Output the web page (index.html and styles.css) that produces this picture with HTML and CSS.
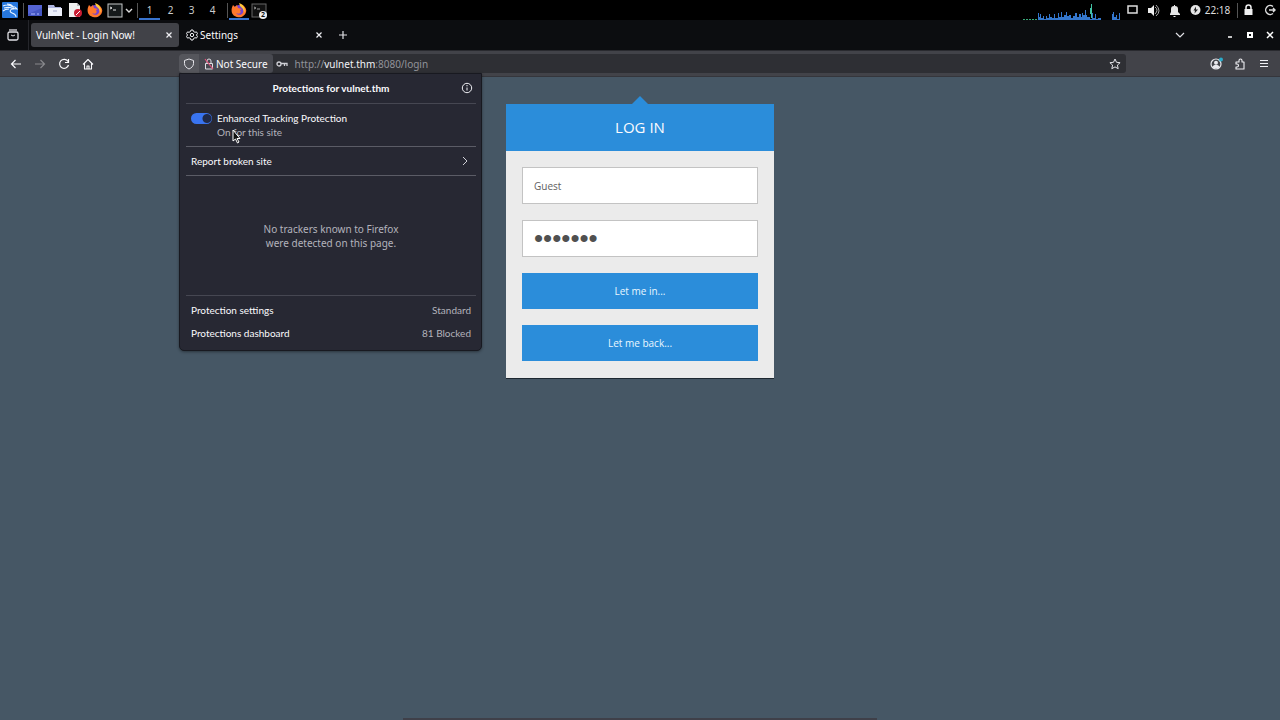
FILE: index.html
```html
<!DOCTYPE html>
<html lang="en">
<head>
    <meta charset="UTF-8">
    <meta name="viewport" content="width=device-width, initial-scale=1.0">
    <title>VulnNet - Login Now!</title>
    <link rel="stylesheet" href="styles.css">
</head>
<body>
    <!-- Desktop panel -->
    <header class="panel">
        <div class="panel-group">
            <button class="kali" aria-label="Applications">
                <svg width="16" height="16" viewBox="0 0 16 16"><rect width="16" height="16" rx="1" fill="#2777dc"/><path d="M1 4c4-2 7-1 10 1M2 6c4-1 7-1 9 1-3 0-4 3-1 4s4 2 4 4M5 2c3 0 5 1 6 3 2-1 3 1 4 2-2 0-3 0-4-1M1 9c2-2 4-2 6-2" fill="none" stroke="#e8f3ff" stroke-width="1.1"/></svg>
            </button>
            <span class="divider"></span>
            <button aria-label="Show desktop">
                <svg width="16" height="16" viewBox="0 0 16 16"><path d="M1 3h14v11H1z" fill="#4455c0"/><path d="M1 3h14v3L1 12z" fill="#5564d2"/><path d="M4 12h4M10 12h2" stroke="#aeb9ff"/></svg>
            </button>
            <button aria-label="Files">
                <svg width="16" height="16" viewBox="0 0 16 16"><path d="M1 3h6l1 2h6v3H1z" fill="#aeb4df"/><path d="M1 6h14v8H1z" fill="#eceef8"/><path d="M6 9h4" stroke="#a2a8c9"/></svg>
            </button>
            <button aria-label="Text editor">
                <svg width="16" height="16" viewBox="0 0 16 16"><path d="M2 1h8l3 3v11H2z" fill="#f0f0ef"/><path d="M10 1v3h3" fill="#bbb"/><circle cx="11" cy="11" r="4" fill="#c91d32"/><path d="M9 13l4-4" stroke="#fff"/></svg>
            </button>
            <button aria-label="Firefox">
                <svg width="16" height="16" viewBox="0 0 16 16"><circle cx="8" cy="9" r="6" fill="#7543d1"/><path d="M2 3l2 2 2-2 1 3 4 1-2 1c2 3-1 5-4 3 3 4 9 1 7-4l-2-5c4 2 6 5 5 8-1 4-5 6-9 5C1 14-1 9 2 3z" fill="#ff782c"/><path d="M8 1c5 2 7 6 5 10 0-4-2-5-4-7z" fill="#ffcb38"/></svg>
            </button>
            <button aria-label="Terminal">
                <svg width="16" height="16" viewBox="0 0 16 16"><rect x="1" y="2" width="14" height="13" fill="#15191a" stroke="#c5c8c8"/><path d="M3 5l2 1-2 1M6 8h3" fill="none" stroke="#e5e5e5"/></svg>
            </button>
            <button class="arrow" aria-label="More terminals">
                <svg width="8" height="16" viewBox="0 0 8 16"><path d="M1 7l3 3 3-3" fill="none" stroke="#ddd" stroke-width="1.4"/></svg>
            </button>
            <span class="divider"></span>
            <nav class="workspaces" aria-label="Workspaces">
                <button class="active">1</button>
                <button>2</button>
                <button>3</button>
                <button>4</button>
            </nav>
            <span class="divider"></span>
            <button class="active" aria-label="Firefox window">
                <svg width="16" height="16" viewBox="0 0 16 16"><circle cx="8" cy="9" r="6" fill="#7543d1"/><path d="M2 3l2 2 2-2 1 3 4 1-2 1c2 3-1 5-4 3 3 4 9 1 7-4l-2-5c4 2 6 5 5 8-1 4-5 6-9 5C1 14-1 9 2 3z" fill="#ff782c"/><path d="M8 1c5 2 7 6 5 10 0-4-2-5-4-7z" fill="#ffcb38"/></svg>
            </button>
            <button class="windows" aria-label="2 terminal windows">
                <svg width="16" height="16" viewBox="0 0 16 16"><rect x="1" y="2" width="14" height="13" fill="#111" stroke="#666"/><path d="M3 5l2 1-2 1M6 7h3" fill="none" stroke="#999"/></svg>
                <span class="badge">2</span>
            </button>
        </div>
        <div class="panel-group tray">
            <svg class="cpu" width="98" height="18" viewBox="0 0 98 18"><path d="M0 17.500h14" stroke="#38a879" stroke-dasharray="2 1"/><path d="M15 18v-7h1v4h1v-3h1v4h2v-2h1v3h2v-3h1v2h2v-4h1v3h2v1h2v-4h1v4h3v-5h1v4h2v-5h1v5h2v-2h2v-3h1v4h2v-1h2v3h2v-2h2v-3h2v4h2v-3h2v3h1v-4h1v2h2v-5h1v5h1v2h3v2h2v-6h1v5h2v-4h1v5h2v-1h3v2h11v-6h1v-2h1v5h2v-2h1v4h2v-6h1v7z" fill="#3477cd"/><path d="M68.500 16V2M67.500 12V6" stroke="#43c3a6" fill="none"/></svg>
            <button aria-label="Display">
                <svg width="13" height="16" viewBox="0 0 13 16"><path d="M2 4h9v7H2z" fill="none" stroke="#ddd" stroke-width="1.500"/></svg>
            </button>
            <button aria-label="Volume">
                <svg width="13" height="16" viewBox="0 0 13 16"><path d="M1 6h3l3-3v11l-3-3H1z" fill="#eee"/><path d="M8 5q4 3 0 7M9 3q6 6 0 11" fill="none" stroke="#aaa"/></svg>
            </button>
            <button aria-label="Notifications">
                <svg width="13" height="16" viewBox="0 0 13 16"><path d="M2 12l1-2V7c0-2 1-3 3-3V3h1v1c2 0 3 1 3 3v3l2 2v1H2zM5 14h3l-1 1H6z" fill="#e5e5e5"/></svg>
            </button>
            <button aria-label="Power">
                <svg width="13" height="16" viewBox="0 0 13 16"><circle cx="6.500" cy="8" r="5" fill="#e5e5e5"/><path d="M7 4.500L4.500 8.500H6L5.500 11.500 9 7.500H7z" fill="#222"/></svg>
            </button>
            <time>22:18</time>
            <span class="divider"></span>
            <button aria-label="Lock">
                <svg width="13" height="16" viewBox="0 0 13 16"><path d="M2.500 7h8v6h-8z" fill="#eee"/><path d="M4 7.500V5.500Q4 3 6.500 3T9 5.500v2" fill="none" stroke="#eee" stroke-width="1.500"/></svg>
            </button>
            <button aria-label="Log out">
                <svg width="13" height="16" viewBox="0 0 13 16"><path d="M10 4.500a4.500 4.500 0 1 0 0 7M6 8h6M10 6l2 2-2 2" fill="none" stroke="#ddd" stroke-width="1.400"/></svg>
            </button>
        </div>
    </header>

    <!-- Tab strip -->
    <div class="tabs">
        <button class="history" aria-label="View recent browsing">
            <svg width="16" height="16" viewBox="0 0 16 16"><rect x="3" y="5" width="10" height="8" rx="1.500" fill="none" stroke="#e1e1e6" stroke-width="1.300"/><path d="M4 3h8" stroke="#e1e1e6" stroke-width="1.300"/><path d="M6 8q2 2 4 0" fill="none" stroke="#e1e1e6"/></svg>
        </button>
        <div class="tab selected">
            <span>VulnNet - Login Now!</span>
            <button aria-label="Close tab"><svg width="8" height="8" viewBox="0 0 8 8"><path d="M1.500 1.500l5 5M6.500 1.500l-5 5" stroke="#f0f0f4" stroke-width="1.200"/></svg></button>
        </div>
        <div class="tab">
            <svg width="12" height="12" viewBox="0 0 12 12"><path d="M5 1h2l.5 1.500 1.500.8 1.500-.4 1 1.700L10.400 6l1.100 1.400-1 1.700-1.500-.4-1.500.8L7 11H5l-.5-1.500L3 8.700l-1.500.4-1-1.700L1.600 6 .5 4.600l1-1.700L3 3.300l1.500-.8z" fill="none" stroke="#f0f0f4"/><circle cx="6" cy="6" r="1.700" fill="none" stroke="#f0f0f4"/></svg>
            <span>Settings</span>
            <button aria-label="Close tab"><svg width="8" height="8" viewBox="0 0 8 8"><path d="M1.500 1.500l5 5M6.500 1.500l-5 5" stroke="#f0f0f4" stroke-width="1.200"/></svg></button>
        </div>
        <button class="new-tab" aria-label="New tab"><svg width="10" height="10" viewBox="0 0 10 10"><path d="M5 1v8M1 5h8" stroke="#e1e1e6" stroke-width="1.200"/></svg></button>
        <div class="window-controls">
            <button class="list-tabs" aria-label="List all tabs"><svg width="10" height="10" viewBox="0 0 10 10"><path d="M1 3l4 4 4-4" fill="none" stroke="#e1e1e6" stroke-width="1.200"/></svg></button>
            <button aria-label="Minimize"><svg width="10" height="10" viewBox="0 0 10 10"><path d="M3 7h4" stroke="#fff" stroke-width="1.500"/></svg></button>
            <button aria-label="Maximize"><svg width="10" height="10" viewBox="0 0 10 10"><path d="M3 3h4v4H3z" fill="none" stroke="#fff" stroke-width="2"/></svg></button>
            <button aria-label="Close"><svg width="10" height="10" viewBox="0 0 10 10"><path d="M2 2l6 6M8 2L2 8" stroke="#fff" stroke-width="1.500"/></svg></button>
        </div>
    </div>

    <!-- Navigation bar -->
    <div class="toolbar">
        <div class="tools">
            <button aria-label="Back"><svg width="16" height="16" viewBox="0 0 16 16"><path d="M13 8H3.500M7.500 4l-4 4 4 4" fill="none" stroke="#fbfbfe" stroke-width="1.200"/></svg></button>
            <button aria-label="Forward" disabled><svg width="16" height="16" viewBox="0 0 16 16"><path d="M3 8h9.500M8.500 4l4 4-4 4" fill="none" stroke="#88888c" stroke-width="1.200"/></svg></button>
            <button aria-label="Reload"><svg width="16" height="16" viewBox="0 0 16 16"><path d="M12 5.500A4.500 4.500 0 1 0 12.500 9M12.500 3v3.500H9" fill="none" stroke="#fbfbfe" stroke-width="1.200"/></svg></button>
            <button aria-label="Home"><svg width="16" height="16" viewBox="0 0 16 16"><path d="M3 8.500l5-5 5 5M4.500 7.500V13h7V7.500M7 13v-3h2v3" fill="none" stroke="#fbfbfe" stroke-width="1.100" stroke-linejoin="round"/></svg></button>
        </div>
        <div class="url-bar">
            <button class="shield" aria-label="Protections" aria-expanded="true"><svg width="12" height="12" viewBox="0 0 12 12"><path d="M6 1l4.500 1.500v3C10.500 8 8.500 10 6 11 3.500 10 1.500 8 1.500 5.500v-3z" fill="none" stroke="#e5e5ea" stroke-linejoin="round"/></svg></button>
            <button class="security"><svg width="12" height="12" viewBox="0 0 12 12"><path d="M2.500 5.500h7V11h-7zM4 5V3q0-2 2-2t2 2v2" fill="none" stroke="#dedee3"/><path d="M2 1l8 10" stroke="#e2507b" stroke-width="1.200"/></svg><span>Not Secure</span></button>
            <svg class="key" width="12" height="12" viewBox="0 0 12 12"><circle cx="3" cy="6" r="2" fill="none" stroke="#d0d0d6" stroke-width="1.300"/><path d="M5 5.500h6V8M8.500 6v2" fill="none" stroke="#d0d0d6" stroke-width="1.300"/></svg>
            <a class="url" href="#login">http://<b>vulnet.thm</b>:8080/login</a>
            <button class="star" aria-label="Bookmark"><svg width="12" height="12" viewBox="0 0 12 12"><path d="M6 1l1.500 3.300 3.600.4-2.700 2.400.8 3.600L6 8.900l-3.200 1.800.8-3.600L.9 4.700l3.600-.4z" fill="none" stroke="#e5e5ea" stroke-linejoin="round"/></svg></button>

            <section class="popup" aria-label="Protections">
                <div class="popup-title">
                    <h2>Protections for vulnet.thm</h2>
                    <button aria-label="Information"><svg width="12" height="12" viewBox="0 0 12 12"><circle cx="6" cy="6" r="4.700" fill="none" stroke="#f0f0f5"/><path d="M6 5.500v3M6 3v1.300" stroke="#f0f0f5"/></svg></button>
                </div>
                <div class="tracking">
                    <input type="checkbox" id="tracking" class="switch" checked>
                    <label for="tracking">Enhanced Tracking Protection<small>On for this site</small></label>
                </div>
                <button class="popup-row report"><span>Report broken site</span><svg width="10" height="10" viewBox="0 0 10 10"><path d="M3 1l4 4-4 4" fill="none" stroke="#d0d0d8"/></svg></button>
                <p class="no-trackers">No trackers known to Firefox were detected on this page.</p>
                <div class="popup-links">
                    <button class="popup-row"><span>Protection settings</span><em>Standard</em></button>
                    <button class="popup-row"><span>Protections dashboard</span><em>81 Blocked</em></button>
                </div>
                <svg class="pointer" width="10" height="16" viewBox="0 0 10 16"><path d="M1 1v11l2.500-2 2 4 1.500-1-2-3.500h3z" fill="#111" stroke="#fff"/></svg>
            </section>
        </div>
        <div class="tools">
            <button class="account" aria-label="Account"><svg width="16" height="16" viewBox="0 0 16 16"><circle cx="8" cy="8" r="5" fill="none" stroke="#e8e8ed" stroke-width="1.200"/><circle cx="8" cy="6.700" r="2" fill="#e8e8ed"/><path d="M4.500 11c1-3 6-3 7 0-2 2-5 2-7 0z" fill="#e8e8ed"/><circle cx="13" cy="3.500" r="2" fill="#2baac9"/></svg></button>
            <button aria-label="Extensions"><svg width="16" height="16" viewBox="0 0 16 16"><path d="M4 6h3V4.500a1.500 1.500 0 0 1 3 0V6h2v7H4v-2h1a1.500 1.500 0 0 0 0-3H4z" fill="none" stroke="#f0f0f4" stroke-width="1.100" stroke-linejoin="round"/></svg></button>
            <button aria-label="Menu"><svg width="16" height="16" viewBox="0 0 16 16"><path d="M4 4.500h8M4 7.500h8M4 10.500h8" stroke="#f0f0f4" stroke-width="1.100"/></svg></button>
        </div>
    </div>

    <main>
        <form class="login" id="login">
            <h1>LOG IN</h1>
            <div class="fields">
                <input type="text" placeholder="Guest" aria-label="Username">
                <input type="password" value="letmein" aria-label="Password">
                <button type="button">Let me in...</button>
                <button type="button">Let me back...</button>
            </div>
        </form>
    </main>
    <div class="dock"></div>
</body>
</html>
```
FILE: styles.css
```css
* {
    margin: 0;
    padding: 0;
    box-sizing: border-box;
}

body {
    min-height: 100vh;
    display: flex;
    flex-direction: column;
    background: #465765;
    color: #fbfbfe;
    font-family: "Noto Sans", sans-serif;
    font-size: 10px;
    line-height: 14px;
}

button {
    border: none;
    background: none;
    color: inherit;
    font: inherit;
}

svg {
    display: block;
    flex: none;
}

.panel {
    height: 20px;
    display: flex;
    justify-content: space-between;
    background: #000;
}

.panel-group {
    display: flex;
    align-items: center;
}

.panel-group button {
    width: 20px;
    height: 20px;
    display: flex;
    align-items: center;
    justify-content: center;
}

.panel-group .arrow {
    width: 8px;
}

.divider {
    width: 1px;
    height: 15px;
    margin: 0 1px 0 4px;
    background: #555;
}

.kali + .divider {
    margin: 0 1px 0 3px;
}

.workspaces {
    display: flex;
}

.workspaces button {
    width: 21px;
    color: #ccc;
}

.panel-group .active {
    box-shadow: inset 0 -2px #3974cf;
}

.windows {
    position: relative;
}

.badge {
    position: absolute;
    right: 2px;
    bottom: 1px;
    width: 8px;
    height: 8px;
    border-radius: 50%;
    background: #eee;
    color: #111;
    font-size: 7px;
    font-weight: bold;
    line-height: 8px;
}

.tray .cpu {
    margin-right: 1px;
    align-self: flex-end;
}

.tray button {
    width: 21px;
}

.tray time {
    width: 23px;
    display: flex;
    justify-content: center;
    color: #ddd;
}

.tray .divider {
    margin: 0 0 0 8px;
}

.tabs {
    height: 30px;
    display: flex;
    align-items: center;
    background: #0c0d10;
}

.history {
    width: 29px;
    height: 30px;
    padding-left: 5px;
    border-right: 1px solid #25262b;
}

.tab {
    width: 148px;
    height: 24px;
    margin-left: 2px;
    padding: 0 6px 0 5px;
    display: flex;
    align-items: center;
    gap: 2px;
    border-radius: 3px;
}

.tab span {
    flex: 1;
    white-space: nowrap;
}

.tab button {
    width: 8px;
    height: 8px;
}

.tab.selected {
    background: #414248;
}

.new-tab {
    margin-left: 9px;
}

.window-controls {
    margin-left: auto;
    padding-right: 5px;
    display: flex;
    gap: 10px;
}

.list-tabs {
    margin-right: 30px;
}

.toolbar {
    height: 27px;
    padding: 0 8px;
    display: flex;
    align-items: center;
    background: #424349;
    border-top: 1px solid #292a2f;
    border-bottom: 1px solid #35363c;
}

.tools {
    display: flex;
    gap: 8px;
}

.url-bar {
    position: relative;
    flex: 1;
    height: 19px;
    margin: 0 82px 0 83px;
    display: flex;
    align-items: center;
    background: #2e2f34;
    border-radius: 3px;
}

.shield {
    height: 19px;
    padding: 0 4px;
    background: #55565c;
    border-radius: 3px 0 0 3px;
}

.security {
    height: 19px;
    padding: 0 5px 0 4px;
    display: flex;
    align-items: center;
    gap: 1px;
    background: #484950;
    border-radius: 0 3px 3px 0;
}

.key {
    margin: 0 7px 0 3px;
}

.url {
    flex: 1;
    color: #92939a;
    text-decoration: none;
}

.url b {
    color: #f3f3f7;
    font-weight: normal;
}

.star {
    margin-right: 5px;
}

/* Panel opened from the shield button */
.popup {
    position: absolute;
    top: 19px;
    left: 0;
    width: 303px;
    padding: 0 5px 6px 6px;
    background: #272833;
    border: 1px solid #181920;
    border-radius: 0 0 5px 5px;
    box-shadow: 0 1px 3px rgba(0, 0, 0, 0.4);
    font-family: Lato, sans-serif;
}

.popup-title {
    height: 30px;
    padding-bottom: 2px;
    display: flex;
    align-items: center;
    border-bottom: 1px solid #464752;
}

.popup-title h2 {
    flex: 1;
    padding-left: 15px;
    font-size: 10px;
    text-align: center;
}

.popup-title button {
    margin-right: 3px;
}

.tracking {
    height: 43px;
    padding: 7px 5px;
    display: flex;
    gap: 5px;
    border-bottom: 1px solid #5b5c66;
}

.switch {
    appearance: none;
    width: 21px;
    height: 11px;
    margin-top: 2px;
    border-radius: 6px;
    background: radial-gradient(circle at 16px 50%, #202a48 4px, #3974f0 5px);
}

.tracking small {
    display: block;
    color: #b3b3bc;
    font-size: 10px;
}

.popup-row {
    width: 100%;
    height: 23px;
    padding: 0 5px;
    display: flex;
    align-items: center;
    justify-content: space-between;
}

.popup-row em {
    color: #b3b3bc;
    font-style: normal;
}

.report {
    height: 29px;
    padding-right: 6px;
    border-bottom: 1px solid #5b5c66;
}

.no-trackers {
    height: 119px;
    padding: 46px 70px;
    color: #b3b3bc;
    font-family: "Noto Sans", sans-serif;
    text-align: center;
}

.popup-links {
    padding-top: 2px;
    border-top: 1px solid #464752;
}

.pointer {
    position: absolute;
    top: 55px;
    left: 52px;
}

main {
    flex: 1;
    padding-top: 27px;
}

.login {
    position: relative;
    width: 268px;
    margin: 0 auto;
    background: #ebebeb;
    border-bottom: 1px solid #1d2730;
    font-family: "Open Sans", sans-serif;
}

.login::before {
    content: "";
    position: absolute;
    top: -8px;
    left: 50%;
    margin-left: -8px;
    border: 8px solid transparent;
    border-top: none;
    border-bottom-color: #2b8dda;
}

.login h1 {
    background: #2b8dda;
    font-size: 15px;
    font-weight: 400;
    line-height: 47px;
    text-align: center;
}

.fields {
    padding: 16px 16px 17px;
    display: flex;
    flex-direction: column;
    gap: 16px;
}

.fields input {
    width: 100%;
    height: 37px;
    padding: 0 11px;
    background: #fff;
    border: 1px solid #c3c3c3;
    color: #505050;
    font-family: inherit;
    font-size: 10px;
    outline: none;
}

.fields input::placeholder {
    color: #606060;
}

.fields input[type="password"] {
    font-family: "Liberation Sans", sans-serif;
    font-size: 26px;
}

.fields button {
    height: 36px;
    background: #2b8dda;
    color: #e9f7ff;
    font-size: 10px;
}

.dock {
    width: 37%;
    height: 2px;
    margin: 0 auto;
    background: #3f4049;
}
```
